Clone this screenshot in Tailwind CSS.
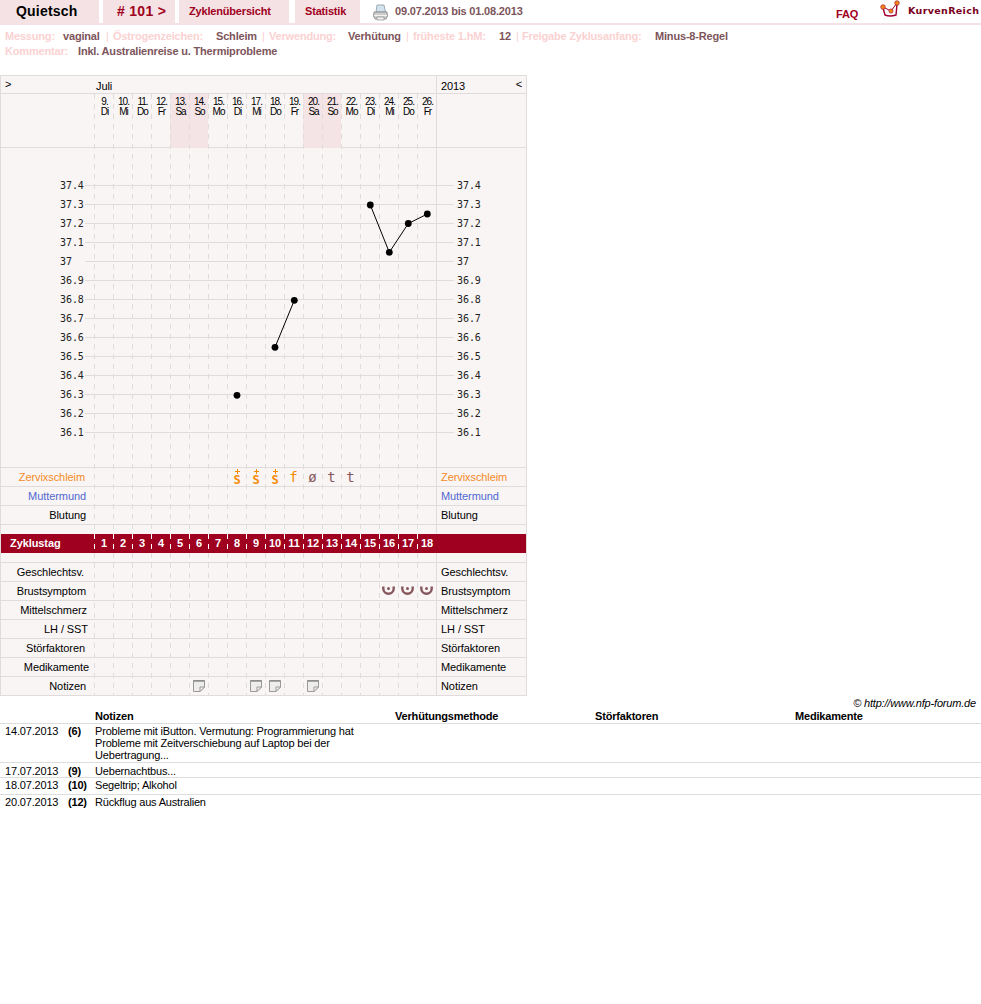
<!DOCTYPE html>
<html lang="de">
<head>
  <meta charset="UTF-8" />
  <title>Quietsch - Zyklus 101</title>
  <script src="https://cdn.jsdelivr.net/npm/@tailwindcss/browser@4"></script>
</head>
<body class="bg-white text-black font-['Liberation_Sans',Arial,sans-serif] text-[11px] tracking-[-0.18px]">

  <!-- Header -->
  <header class="flex items-stretch h-[25px] border-b-2 border-[#f4e2e4] relative">
    <div class="w-[99px] bg-[#f4e2e4] pl-4 flex items-center text-[14px] font-bold tracking-[0.2px]">Quietsch</div>
    <a class="ml-1 w-[72px] bg-[#f4e2e4] pl-[14px] flex items-center text-[14px] font-bold tracking-[0.3px] text-[#a00020]"># 101 &gt;</a>
    <a class="ml-1 w-[110px] bg-[#f4e2e4] pl-[10px] flex items-center font-bold text-[#a00020]">Zyklenübersicht</a>
    <a class="ml-[6px] w-[65px] bg-[#f4e2e4] pl-[10px] flex items-center font-bold text-[#a00020]">Statistik</a>
    <svg class="ml-[13px] mt-[4px]" width="15" height="17" viewBox="0 0 15 17">
      <path d="M4 1 L11 1 L12.5 8 L3 8 Z" fill="#d3e3ee" stroke="#8a98a4" stroke-width="0.8" />
      <path d="M1 8 L14 8 L14.5 12 L13 15 L2 15 L0.5 12 Z" fill="#cdcdcd" stroke="#808080" stroke-width="0.8" />
      <path d="M1 11.5 L14 11.5" stroke="#f2f2f2" stroke-width="1" />
      <path d="M4 13 L11 13 L11 16 L4 16 Z" fill="#f0f0f0" stroke="#909090" stroke-width="0.7" />
    </svg>
    <div class="ml-[7px] flex items-center font-bold text-[#7d555b]">09.07.2013 bis 01.08.2013</div>
    <a class="absolute left-[836px] top-[8px] font-bold text-[#a00020] leading-[13px]">FAQ</a>
    <!-- logo -->
    <div class="absolute left-[880px] top-0 flex items-start">
      <svg width="22" height="20" viewBox="0 0 22 20">
        <path d="M0 13 H22 M5 0 V20 M17 4 V20" stroke="#eeeaea" stroke-width="0.6" />
        <path d="M3 7 L11 11 L17 3" fill="none" stroke="#a00030" stroke-width="1" />
        <path d="M3 8 L5 15 Q10 17 16 15 L17 4" fill="none" stroke="#a00030" stroke-width="1.4" />
        <circle cx="3" cy="7" r="2.3" fill="#f08a10" stroke="#a00030" stroke-width="0.6" />
        <circle cx="11" cy="11" r="2.1" fill="#f08a10" stroke="#a00030" stroke-width="0.6" />
        <circle cx="17" cy="3" r="2.3" fill="#f08a10" stroke="#a00030" stroke-width="0.6" />
      </svg>
      <span class="ml-[6px] mt-[4px] font-['DejaVu_Sans',sans-serif] font-bold text-[9.5px] tracking-[0.35px] text-[#7a0020]">KurvenReich</span>
    </div>
  </header>

  <!-- Zyklus-Angaben -->
  <section class="pl-[5px] pt-[4px] h-[50px] font-bold leading-[15px]">
    <div class="flex text-[#7d555b] whitespace-nowrap">
      <span class="w-[58px] text-[#fad2d2]">Messung:</span><span class="w-[43px]">vaginal</span>
      <span class="w-[7px] font-normal text-[#fad2d2]">|</span>
      <span class="w-[103px] text-[#fad2d2]">Östrogenzeichen:</span><span class="w-[46px]">Schleim</span>
      <span class="w-[7px] font-normal text-[#fad2d2]">|</span>
      <span class="w-[79px] text-[#fad2d2]">Verwendung:</span><span class="w-[58px]">Verhütung</span>
      <span class="w-[7px] font-normal text-[#fad2d2]">|</span>
      <span class="w-[86px] text-[#fad2d2]">früheste 1.hM:</span><span class="w-[17px]">12</span>
      <span class="w-[6px] font-normal text-[#fad2d2]">|</span>
      <span class="w-[133px] text-[#fad2d2]">Freigabe Zyklusanfang:</span><span>Minus-8-Regel</span>
    </div>
    <div class="flex text-[#7d555b]">
      <span class="w-[73px] text-[#fad2d2]">Kommentar:</span><span>Inkl. Australienreise u. Thermiprobleme</span>
    </div>
  </section>

  <!-- Kurve -->
  <div id="chart" class="relative w-[527px] h-[621px] border border-[#e0dcdc] bg-[#f9f5f5] tracking-[-0.08px]">
    <div class="grid grid-cols-[93px_342px_90px] h-[18px] border-b border-[#e0dcdc] items-center">
      <div class="pl-1 pb-[4px]">&gt;</div>
      <div class="pl-[2px]">Juli</div>
      <div class="border-l border-[#e0dcdc] h-full flex items-center justify-between pl-1 pr-1"><span>2013</span><span class="pb-[4px]">&lt;</span></div>
    </div>
    <div class="grid grid-cols-[93px_342px_90px] h-[54px] border-b border-[#e0dcdc]">
      <div></div>
      <div id="days" class="grid grid-cols-[repeat(18,19px)]"></div>
      <div class="border-l border-[#e0dcdc]"></div>
    </div>

    <!-- Temperaturkurve -->
    <svg id="plot" class="block relative z-10" width="525" height="320" viewBox="1 148 525 320"></svg>

    <div id="rows-top"></div>

    <div class="grid grid-cols-[93px_342px_90px] h-[9px]">
      <div></div><div></div><div class="border-l border-[#e0dcdc]"></div>
    </div>

    <!-- Zyklustag -->
    <div class="grid grid-cols-[93px_342px_90px] h-[19px] bg-[#a00020] text-white font-bold items-center">
      <div class="pl-[9px]">Zyklustag</div>
      <div id="cycle" class="grid grid-cols-[repeat(18,19px)] text-center"></div>
      <div></div>
    </div>

    <div class="grid grid-cols-[93px_342px_90px] h-[10px] border-b border-[#e0dcdc]">
      <div></div><div></div><div class="border-l border-[#e0dcdc]"></div>
    </div>

    <div id="rows-bottom"></div>

    <!-- gestrichelte Tagesspalten -->
    <svg id="dashes" class="absolute left-[-1px] top-[-1px] pointer-events-none" width="527" height="621"></svg>
  </div>

  <!-- Notizen -->
  <div class="text-right pr-[5px] italic h-[14px] leading-[14px]">© http://www.nfp-forum.de</div>
  <table class="table-fixed w-[981px] border-collapse">
    <colgroup>
      <col class="w-[68px]" /><col class="w-[27px]" /><col class="w-[300px]" /><col class="w-[200px]" /><col class="w-[200px]" /><col />
    </colgroup>
    <thead>
      <tr class="h-[13px] border-b border-[#dddddd] text-left font-bold leading-3">
        <th></th><th></th><th class="font-bold">Notizen</th><th class="font-bold">Verhütungsmethode</th><th class="font-bold">Störfaktoren</th><th class="font-bold">Medikamente</th>
      </tr>
    </thead>
    <tbody class="leading-3 align-top">
      <tr class="h-[39px] border-b border-[#dddddd]">
        <td class="pl-[5px] pt-[1px]">14.07.2013</td><td class="pt-[1px] font-bold">(6)</td>
        <td class="pt-[1px]">Probleme mit iButton. Vermutung: Programmierung hat Probleme mit Zeitverschiebung auf Laptop bei der Uebertragung...</td><td></td><td></td><td></td>
      </tr>
      <tr class="h-[15px] border-b border-[#dddddd]">
        <td class="pl-[5px] pt-[2px]">17.07.2013</td><td class="pt-[2px] font-bold">(9)</td><td class="pt-[2px]">Uebernachtbus...</td><td></td><td></td><td></td>
      </tr>
      <tr class="h-[17px] border-b border-[#dddddd]">
        <td class="pl-[5px] pt-[1px]">18.07.2013</td><td class="pt-[1px] font-bold">(10)</td><td class="pt-[1px]">Segeltrip; Alkohol</td><td></td><td></td><td></td>
      </tr>
      <tr class="h-[17px]">
        <td class="pl-[5px] pt-[1px]">20.07.2013</td><td class="pt-[1px] font-bold">(12)</td><td class="pt-[1px]">Rückflug aus Australien</td><td></td><td></td><td></td>
      </tr>
    </tbody>
  </table>

  <script>
    const LINE = '#e0dcdc';

    // day header
    const dayNames = ['Di','Mi','Do','Fr','Sa','So','Mo'];
    let html = '';
    for (let i = 0; i < 18; i++) {
      const weekend = dayNames[i % 7] === 'Sa' || dayNames[i % 7] === 'So';
      html += `<div class="${weekend ? 'bg-[#f4e4e6]' : ''} text-center text-[10px] leading-[10px] tracking-[-1px] pl-[2px] pt-[3px] h-[54px]">${i + 9}.<br>${dayNames[i % 7]}</div>`;
    }
    document.getElementById('days').innerHTML = html;

    // cycle day numbers
    html = '';
    for (let i = 1; i <= 18; i++) html += `<div class="pl-[1px]">${i}</div>`;
    document.getElementById('cycle').innerHTML = html;

    // plot
    let plot = '';
    const temps = ['37.4','37.3','37.2','37.1','37','36.9','36.8','36.7','36.6','36.5','36.4','36.3','36.2','36.1'];
    temps.forEach((t, n) => {
      const y = 185 + n * 19;
      plot += `<line x1="85" x2="454" y1="${y + 0.5}" y2="${y + 0.5}" stroke="${LINE}" />`;
      plot += `<text x="60" y="${y + 4}" font-family="DejaVu Sans Mono" font-size="10" fill="#222">${t}</text>`;
      plot += `<text x="457" y="${y + 4}" font-family="DejaVu Sans Mono" font-size="10" fill="#222">${t}</text>`;
    });
    plot += `<line x1="436.5" x2="436.5" y1="148" y2="468" stroke="${LINE}" />`;
    plot += `<line x1="1" x2="526" y1="467.5" y2="467.5" stroke="${LINE}" />`;
    const segments = [
      [[237, 395.3]],
      [[275, 347.3], [294.3, 300.3]],
      [[370.3, 205], [389.3, 252.3], [408.3, 223.5], [427.3, 214]]
    ];
    segments.forEach(pts => {
      if (pts.length > 1) plot += `<polyline fill="none" stroke="#000" stroke-width="1" points="${pts.map(p => p.join(',')).join(' ')}" />`;
      pts.forEach(p => { plot += `<circle cx="${p[0]}" cy="${p[1]}" r="3.4" fill="#000" />`; });
    });
    document.getElementById('plot').innerHTML = plot;

    // symbols
    const sPlus = `<div class="flex flex-col items-center pl-[1px] text-[#f58a07] font-['DejaVu_Sans_Mono',monospace] font-bold"><svg class="mb-[1px]" width="5" height="5" viewBox="0 0 5 5"><path d="M0 2.5 H5 M2.5 0 V5" stroke="#f58a07" stroke-width="1" /></svg><span class="text-[12px] leading-[10px] h-[10px]">S</span></div>`;
    const mono = (c, color) => `<div class="${color} font-['DejaVu_Sans_Mono',monospace] text-[14px] leading-none text-center">${c}</div>`;
    const brust = `<svg class="mx-auto mb-[1px]" width="13" height="13" viewBox="0 0 13 13"><path d="M1.3 2.5 V4.5 A5.2 5.2 0 0 0 11.7 4.5 V2.5" fill="none" stroke="#85575c" stroke-width="2.4" /><circle cx="6.5" cy="4.5" r="1.5" fill="#85575c" /></svg>`;
    const note = `<svg class="mx-auto" width="12" height="12" viewBox="0 0 12 12"><path d="M.5 .5 H11.5 V7 L7 11.5 H.5 Z" fill="#efedeb" stroke="#999" /><path d="M.5 1 H11.5" stroke="#888" stroke-width="1.4" /><path d="M7 11.5 V7 H11.5 Z" fill="#f9f5f5" stroke="#999" /></svg>`;

    function row(label, color, pad, items, last) {
      let cells = '';
      for (let i = 0; i < 18; i++) cells += `<div class="flex items-center justify-center">${items && items[i] ? items[i] : ''}</div>`;
      return `<div class="grid grid-cols-[93px_342px_90px] ${last ? 'h-[18px]' : 'h-[19px] border-b border-[#e0dcdc]'} items-center">
        <div class="text-right ${pad} ${color}">${label}</div>
        <div class="grid grid-cols-[repeat(18,19px)] h-full">${cells}</div>
        <div class="border-l border-[#e0dcdc] h-full flex items-center pl-1 ${color}">${label}</div>
      </div>`;
    }

    const orange = 'text-[#f58a07]';
    const brown = 'text-[#85575c]';
    document.getElementById('rows-top').innerHTML =
      row('Zervixschleim', 'text-[#f48a1e]', 'pr-[9px]', { 7: sPlus, 8: sPlus, 9: sPlus, 10: mono('f', orange), 11: mono('ø', brown), 12: mono('t', brown), 13: mono('t', brown) }) +
      row('Muttermund', 'text-[#5068d0]', 'pr-[8px]') +
      row('Blutung', 'text-black', 'pr-[8px]');

    document.getElementById('rows-bottom').innerHTML =
      row('Geschlechtsv.', 'text-black', 'pr-[10px]') +
      row('Brustsymptom', 'text-black', 'pr-[8px]', { 15: brust, 16: brust, 17: brust }) +
      row('Mittelschmerz', 'text-black', 'pr-[7px]') +
      row('LH / SST', 'text-black', 'pr-[6px]') +
      row('Störfaktoren', 'text-black', 'pr-[9px]') +
      row('Medikamente', 'text-black', 'pr-[5px]') +
      row('Notizen', 'text-black', 'pr-[8px]', { 5: note, 8: note, 9: note, 11: note }, true);

    // dashed day columns, white on the red row
    let dashes = '';
    for (let i = 0; i < 18; i++) {
      const x = 94.5 + i * 19;
      dashes += `<line x1="${x}" x2="${x}" y1="19" y2="459" stroke="${LINE}" stroke-dasharray="5 5" />`;
      dashes += `<line x1="${x}" x2="${x}" y1="459" y2="478" stroke="#fff" stroke-dasharray="5 5" />`;
      dashes += `<line x1="${x}" x2="${x}" y1="478" y2="620" stroke="${LINE}" stroke-dasharray="5 5" />`;
    }
    document.getElementById('dashes').innerHTML = dashes;
  </script>
</body>
</html>
